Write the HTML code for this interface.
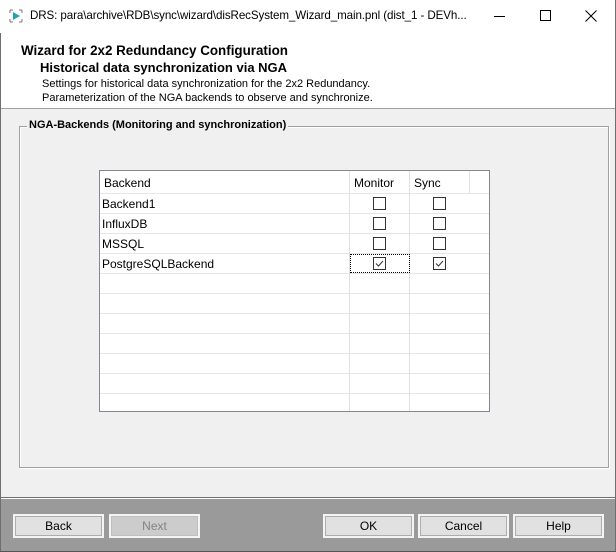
<!DOCTYPE html>
<html><head><style>
*{margin:0;padding:0;box-sizing:border-box}
body{width:616px;height:552px;position:relative;background:#f0f0f0;font-family:"Liberation Sans",sans-serif;overflow:hidden;color:#000}
.a{position:absolute}
.t{font-size:12px;white-space:nowrap}
.btn{position:absolute;top:514px;height:24px;width:91px;background:#e1e1e1;border:2px solid #f4f4f4;outline:1px solid #adadad;outline-offset:-3px;font-size:12px;text-align:center;line-height:20px}
.cb{position:absolute;width:13px;height:13px;border:1px solid #333;background:#fff}
.hl{position:absolute;left:100px;width:389px;height:1px;background:#e6e6e6}
</style></head><body>
<div class="a" style="left:0;top:0;width:616px;height:109px;background:#fff"></div>
<div class="a" style="left:0;top:108px;width:616px;height:1px;background:#a0a0a0"></div>
<svg class="a" style="left:9px;top:9px" width="14" height="14"><path d="M1 1h3M1 1v3M13 1h-3M13 1v3M1 13h3M1 13v-3M13 13h-3M13 13v-3" stroke="#777" fill="none"/><path d="M4 3l7 4-7 4z" fill="#2a9fb0"/></svg>
<div class="a t" style="left:30px;top:9px;font-size:11.6px;letter-spacing:-0.1px">DRS: para\archive\RDB\sync\wizard\disRecSystem_Wizard_main.pnl (dist_1 - DEVh...</div>
<div class="a" style="left:494px;top:16px;width:11px;height:1px;background:#000"></div>
<div class="a" style="left:540px;top:10px;width:11px;height:11px;border:1px solid #000"></div>
<svg class="a" style="left:585px;top:10px" width="12" height="12"><path d="M0.5 0.5l11 11M11.5 0.5l-11 11" stroke="#000"/></svg>
<div class="a t" style="left:21px;top:43px;font-size:13.4px;font-weight:bold">Wizard for 2x2 Redundancy Configuration</div>
<div class="a t" style="left:40px;top:60px;font-size:13px;font-weight:bold">Historical data synchronization via NGA</div>
<div class="a t" style="left:42px;top:78px;font-size:11px">Settings for historical data synchronization for the 2x2 Redundancy.</div>
<div class="a t" style="left:42px;top:92px;font-size:11px">Parameterization of the NGA backends to observe and synchronize.</div>
<div class="a" style="left:19px;top:126px;width:590px;height:342px;border:1px solid #a0a0a0;box-shadow:1px 1px 0 #fff inset,1px 1px 0 #fff"></div>
<div class="a t" style="left:27px;top:119px;background:#f0f0f0;padding:0 2px;font-size:11px;font-weight:bold">NGA-Backends (Monitoring and synchronization)</div>
<div class="a" style="left:99px;top:170px;width:391px;height:242px;background:#fff;border:1px solid #828790"></div>
<div class="hl" style="top:193px"></div><div class="hl" style="top:213px"></div><div class="hl" style="top:233px"></div><div class="hl" style="top:253px"></div><div class="hl" style="top:273px"></div><div class="hl" style="top:293px"></div><div class="hl" style="top:313px"></div><div class="hl" style="top:333px"></div><div class="hl" style="top:353px"></div><div class="hl" style="top:373px"></div><div class="hl" style="top:393px"></div>
<div class="a" style="left:349px;top:171px;width:1px;height:240px;background:#e0e0e0"></div>
<div class="a" style="left:409px;top:171px;width:1px;height:240px;background:#e0e0e0"></div>
<div class="a" style="left:469px;top:171px;width:1px;height:22px;background:#e0e0e0"></div>
<div class="a t" style="left:104px;top:176px">Backend</div>
<div class="a t" style="left:354px;top:176px">Monitor</div>
<div class="a t" style="left:414px;top:176px">Sync</div>
<div class="a t" style="left:102px;top:197px">Backend1</div>
<div class="a t" style="left:102px;top:217px">InfluxDB</div>
<div class="a t" style="left:102px;top:237px">MSSQL</div>
<div class="a t" style="left:102px;top:257px">PostgreSQLBackend</div>
<div class="cb" style="left:373px;top:197px"></div><div class="cb" style="left:433px;top:197px"></div>
<div class="cb" style="left:373px;top:217px"></div><div class="cb" style="left:433px;top:217px"></div>
<div class="cb" style="left:373px;top:237px"></div><div class="cb" style="left:433px;top:237px"></div>
<div class="a" style="left:350px;top:254px;width:60px;height:19px;border:1px dotted #000"></div>
<div class="cb" style="left:373px;top:257px"><svg width="11" height="11" style="position:absolute;left:0;top:0"><path d="M2 5.5l2.5 2.5 4.5-5" stroke="#333" fill="none"/></svg></div>
<div class="cb" style="left:433px;top:257px"><svg width="11" height="11" style="position:absolute;left:0;top:0"><path d="M2 5.5l2.5 2.5 4.5-5" stroke="#333" fill="none"/></svg></div>
<div class="a" style="left:0;top:497px;width:616px;height:1px;background:#6e6e6e"></div>
<div class="a" style="left:0;top:498px;width:616px;height:1px;background:#fff"></div>
<div class="a" style="left:0;top:499px;width:616px;height:53px;background:#9a9a9a"></div>
<div class="a" style="left:0;top:33px;width:1px;height:519px;background:#6e6e6e"></div>
<div class="a" style="left:615px;top:0;width:1px;height:552px;background:#6e6e6e"></div>
<div class="a" style="left:0;top:551px;width:616px;height:1px;background:#555"></div>
<div class="btn" style="left:13px">Back</div>
<div class="btn" style="left:109px;background:#cccccc;color:#838383;outline-color:#bfbfbf">Next</div>
<div class="btn" style="left:323px">OK</div>
<div class="btn" style="left:418px">Cancel</div>
<div class="btn" style="left:513px">Help</div>
</body></html>
